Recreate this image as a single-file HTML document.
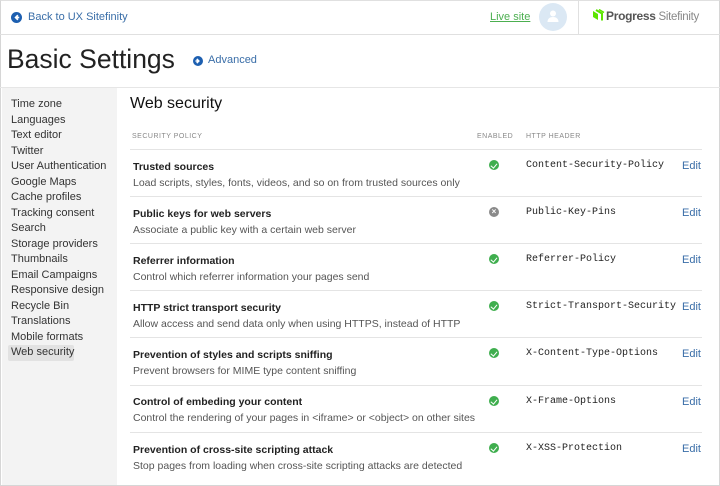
<!DOCTYPE html>
<html><head><meta charset="utf-8"><style>
*{margin:0;padding:0;box-sizing:border-box}
body{width:720px;height:486px;overflow:hidden;background:#fff;font-family:"Liberation Sans",sans-serif;position:relative;color:#333}
.frame{position:absolute;left:0;top:0;width:720px;height:486px;border:1px solid #d6d6d6;border-top:1px solid #e0e0e0}
.a{position:absolute;white-space:nowrap}
.hl{position:absolute;height:1px;background:#e4e4e4}
.side{position:absolute;left:2px;top:88px;width:115px;height:397px;background:#f3f3f3}
.side div{font-size:11px;color:#333;height:15.5px;line-height:15.5px;padding-left:9px;white-space:nowrap}
.side .sel{background:#e2e2e2;width:66px;margin-left:6px;padding-left:3px;border-radius:2px}
.t{font-size:10.5px;font-weight:bold;color:#222;margin-top:2px}
.d{font-size:10.5px;color:#555;margin-top:2px}
.m{font-family:"Liberation Mono",monospace;font-size:10px;color:#222;margin-top:1px}
.e{font-size:11px;color:#3a6ea8;margin-top:1px}
.h{font-size:7px;letter-spacing:0.5px;color:#888;margin-top:2px}
.ok{position:absolute;width:10px;height:10px;border-radius:50%;background:#3fae4e}
.ok:after{content:"";position:absolute;left:3px;top:1.5px;width:2.5px;height:5px;border:solid #fff;border-width:0 1.6px 1.6px 0;transform:rotate(40deg)}
.no{position:absolute;width:10px;height:10px;border-radius:50%;background:#8a8a8a;color:#fff;font-size:8px;line-height:10px;text-align:center;font-weight:bold}
</style></head><body>
<div class="frame"></div>
<svg class="a" style="left:11px;top:12px" width="11" height="11" viewBox="0 0 12 12"><circle cx="6" cy="6" r="6" fill="#1d5fb0"/><path d="M7.5 3.5L5 6l2.5 2.5M5 6h4" stroke="#fff" stroke-width="1.8" fill="none"/></svg>
<div class="a" style="left:28px;top:11px;font-size:11px;color:#3a6ea8">Back to UX Sitefinity</div>
<div class="a" style="left:490px;top:11px;font-size:11px;color:#4caf50;text-decoration:underline">Live site</div>
<div class="a" style="left:539px;top:3px;width:28px;height:28px;border-radius:50%;background:#dbe8f4"></div>
<svg class="a" style="left:546px;top:9px" width="14" height="14" viewBox="0 0 14 14"><circle cx="7" cy="4.5" r="3" fill="#fff"/><path d="M1.5 13c0-3.5 2.5-5 5.5-5s5.5 1.5 5.5 5z" fill="#fff"/></svg>
<div class="a" style="left:578px;top:0;width:1px;height:34px;background:#e0e0e0"></div>
<svg class="a" style="left:592px;top:9px" width="13" height="13" viewBox="0 0 13 13"><path d="M1 2l5 3v6l-5-3z" fill="#5ce500"/><path d="M4 1l6 3.5v7" stroke="#5ce500" stroke-width="2" fill="none"/><path d="M7 0.5l5 3" stroke="#5ce500" stroke-width="1.5" fill="none"/></svg>
<div class="a" style="left:606px;top:9px;font-size:12px;font-weight:bold;color:#555;letter-spacing:-0.3px">Progress<span style="font-weight:normal;color:#888;font-size:11.5px"> Sitefinity</span></div>
<div class="hl" style="left:0;top:34px;width:720px;background:#e0e0e0"></div>
<div class="a" style="left:7px;top:43px;font-size:26.5px;line-height:32px;color:#222">Basic Settings</div>
<svg class="a" style="left:193px;top:56px" width="10" height="10" viewBox="0 0 12 12"><circle cx="6" cy="6" r="6" fill="#1d5fb0"/><path d="M4.5 3.5L7 6l-2.5 2.5M7 6H3" stroke="#fff" stroke-width="1.8" fill="none"/></svg>
<div class="a" style="left:208px;top:54px;font-size:11px;color:#3a6ea8">Advanced</div>
<div class="hl" style="left:0;top:87px;width:720px;background:#e6e6e6"></div>
<div class="side"><div style="height:9px"></div>
<div>Time zone</div><div>Languages</div><div>Text editor</div><div>Twitter</div><div>User Authentication</div><div>Google Maps</div><div>Cache profiles</div><div>Tracking consent</div><div>Search</div><div>Storage providers</div><div>Thumbnails</div><div>Email Campaigns</div><div>Responsive design</div><div>Recycle Bin</div><div>Translations</div><div>Mobile formats</div><div class="sel">Web security</div></div>
<div class="a" style="left:130px;top:95px;font-size:16px;color:#111">Web security</div>
<div class="a h" style="left:132px;top:131px">SECURITY POLICY</div>
<div class="a h" style="left:477px;top:131px">ENABLED</div>
<div class="a h" style="left:526px;top:131px">HTTP HEADER</div>

<div class="hl" style="left:130px;top:149px;width:572px"></div>
<div class="a t" style="left:133px;top:159px">Trusted sources</div>
<div class="a d" style="left:133px;top:175px">Load scripts, styles, fonts, videos, and so on from trusted sources only</div>
<div class="ok" style="left:489px;top:160px"></div>
<div class="a m" style="left:526px;top:159px">Content-Security-Policy</div>
<div class="a e" style="left:682px;top:159px">Edit</div>

<div class="hl" style="left:130px;top:196px;width:572px"></div>
<div class="a t" style="left:133px;top:206px">Public keys for web servers</div>
<div class="a d" style="left:133px;top:222px">Associate a public key with a certain web server</div>
<div class="no" style="left:489px;top:207px">×</div>
<div class="a m" style="left:526px;top:206px">Public-Key-Pins</div>
<div class="a e" style="left:682px;top:206px">Edit</div>

<div class="hl" style="left:130px;top:243px;width:572px"></div>
<div class="a t" style="left:133px;top:253px">Referrer information</div>
<div class="a d" style="left:133px;top:269px">Control which referrer information your pages send</div>
<div class="ok" style="left:489px;top:254px"></div>
<div class="a m" style="left:526px;top:253px">Referrer-Policy</div>
<div class="a e" style="left:682px;top:253px">Edit</div>

<div class="hl" style="left:130px;top:290px;width:572px"></div>
<div class="a t" style="left:133px;top:300px">HTTP strict transport security</div>
<div class="a d" style="left:133px;top:316px">Allow access and send data only when using HTTPS, instead of HTTP</div>
<div class="ok" style="left:489px;top:301px"></div>
<div class="a m" style="left:526px;top:300px">Strict-Transport-Security</div>
<div class="a e" style="left:682px;top:300px">Edit</div>

<div class="hl" style="left:130px;top:337px;width:572px"></div>
<div class="a t" style="left:133px;top:347px">Prevention of styles and scripts sniffing</div>
<div class="a d" style="left:133px;top:363px">Prevent browsers for MIME type content sniffing</div>
<div class="ok" style="left:489px;top:348px"></div>
<div class="a m" style="left:526px;top:347px">X-Content-Type-Options</div>
<div class="a e" style="left:682px;top:347px">Edit</div>

<div class="hl" style="left:130px;top:385px;width:572px"></div>
<div class="a t" style="left:133px;top:394px">Control of embeding your content</div>
<div class="a d" style="left:133px;top:410px">Control the rendering of your pages in &lt;iframe&gt; or &lt;object&gt; on other sites</div>
<div class="ok" style="left:489px;top:396px"></div>
<div class="a m" style="left:526px;top:395px">X-Frame-Options</div>
<div class="a e" style="left:682px;top:395px">Edit</div>

<div class="hl" style="left:130px;top:432px;width:572px"></div>
<div class="a t" style="left:133px;top:442px">Prevention of cross-site scripting attack</div>
<div class="a d" style="left:133px;top:458px">Stop pages from loading when cross-site scripting attacks are detected</div>
<div class="ok" style="left:489px;top:443px"></div>
<div class="a m" style="left:526px;top:442px">X-XSS-Protection</div>
<div class="a e" style="left:682px;top:442px">Edit</div>
</body></html>
